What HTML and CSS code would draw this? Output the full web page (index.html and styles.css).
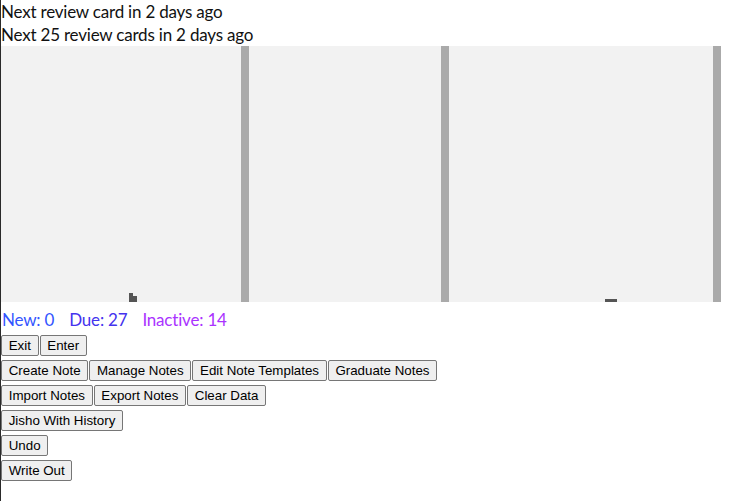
FILE: index.html
```html
<!DOCTYPE html>
<html>
<head>
<meta charset="utf-8">
<link rel="stylesheet" href="styles.css">
</head>
<body>
<div class="page">
  <div class="info">Next review card in 2 days ago</div>
  <div class="info">Next 25 review cards in 2 days ago</div>
  <div class="chart">
    <div class="col col1"><span class="bar" style="height:9px"></span><span class="bar" style="height:6px"></span></div>
    <div class="sep"></div>
    <div class="col col2"></div>
    <div class="sep"></div>
    <div class="col col3"><span class="bar" style="height:3px"></span><span class="bar" style="height:3px"></span><span class="bar" style="height:3px"></span></div>
    <div class="sep"></div>
  </div>
  <div class="stats">
    <span class="new">New: 0</span>
    <span class="due">Due: 27</span>
    <span class="inactive">Inactive: 14</span>
  </div>
  <div class="actions">
    <div class="row"><button>Exit</button><button>Enter</button></div>
    <div class="row"><button>Create Note</button><button>Manage Notes</button><button>Edit Note Templates</button><button>Graduate Notes</button></div>
    <div class="row"><button>Import Notes</button><button>Export Notes</button><button>Clear Data</button></div>
    <div class="row"><button>Jisho With History</button></div>
    <div class="row"><button>Undo</button></div>
    <div class="row"><button>Write Out</button></div>
  </div>
</div>
</body>
</html>
```
FILE: styles.css
```css
html, body {
  margin: 0;
  padding: 0;
  background: #fff;
}
.page {
  border-left: 1px solid #2a2a2a;
  min-height: 501px;
  box-sizing: border-box;
  font-family: "Source Sans Pro", Lato, sans-serif;
  font-size: 17px;
  letter-spacing: -0.2px;
  color: #111;
}
.info {
  line-height: 23px;
  height: 23px;
}
.chart {
  display: flex;
  height: 256px;
  width: 720px;
  background: #f2f2f2;
}
.col {
  display: flex;
  align-items: flex-end;
}
.col1 { width: 240px; padding-left: 128px; box-sizing: border-box; }
.col2 { width: 192px; }
.col3 { width: 264px; padding-left: 156px; box-sizing: border-box; }
.bar {
  width: 4px;
  background: #555;
}
.sep {
  width: 8px;
  background: #aaaaaa;
}
.stats {
  display: flex;
  gap: 15px;
  padding: 6px 0 0 1px;
  line-height: 23px;
  height: 27px;
  box-sizing: content-box;
}
.new { color: #3355ff; }
.due { color: #4433ee; }
.inactive { color: #aa33ff; }
.actions {
  display: flex;
  flex-direction: column;
  gap: 4px;
}
.row {
  display: flex;
  gap: 1px;
}
button {
  font-family: "Liberation Sans", Arial, sans-serif;
  font-size: 13.333px;
  letter-spacing: 0;
  margin: 0;
  padding: 1px 6.7px;
  height: 21px;
  border: 1px solid #767676;
  border-radius: 2px;
  background: #efefef;
  color: #000;
}
```
